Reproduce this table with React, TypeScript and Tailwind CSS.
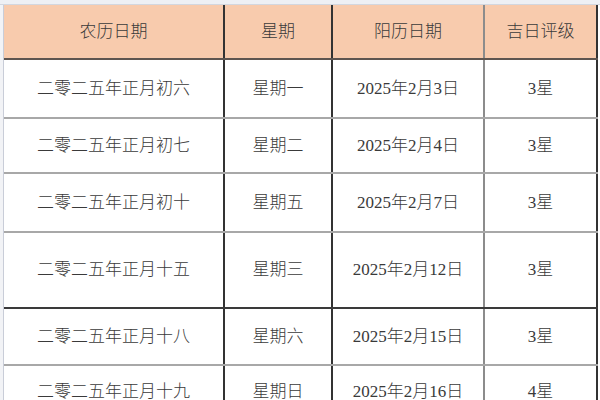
const rows = [
  { lunar: "二零二五年正月初六", week: "星期一", solar: "2025年2月3日", rate: "3星", h: "h-[59px]", b: "border-b-2 border-[#a8a8a8]" },
  { lunar: "二零二五年正月初七", week: "星期二", solar: "2025年2月4日", rate: "3星", h: "h-[55px]", b: "border-b-2 border-[#a8a8a8]" },
  { lunar: "二零二五年正月初十", week: "星期五", solar: "2025年2月7日", rate: "3星", h: "h-[59px]", b: "border-b-2 border-[#a8a8a8]" },
  { lunar: "二零二五年正月十五", week: "星期三", solar: "2025年2月12日", rate: "3星", h: "h-[76px]", b: "border-b-2 border-[#3a3a3a]" },
  { lunar: "二零二五年正月十八", week: "星期六", solar: "2025年2月15日", rate: "3星", h: "h-[57px]", b: "border-b-2 border-[#a8a8a8]" },
  { lunar: "二零二五年正月十九", week: "星期日", solar: "2025年2月16日", rate: "4星", h: "h-[52px]", b: "" },
];

const Row = ({ cells, h, b, head }: { cells: string[]; h: string; b: string; head?: boolean }) => (
  <div className={`flex ${h} ${b} ${head ? "bg-[#f8cbad]" : "bg-white"}`}>
    <div className="w-[221px] flex items-center justify-center border-r-2 border-[#333]">{cells[0]}</div>
    <div className="w-[108px] flex items-center justify-center border-r-2 border-[#333]">{cells[1]}</div>
    <div className="w-[152px] flex items-center justify-center border-r-2 border-[#8c8c8c]">{cells[2]}</div>
    <div className="w-[113px] flex items-center justify-center border-r-2 border-[#333]">{cells[3]}</div>
  </div>
);

const App = () => {
  return (
    <div className="w-[600px] h-[400px] overflow-hidden bg-white text-[#3a3a3a] font-light text-[17px] font-['Liberation_Serif','Noto_Sans_CJK_SC',serif]">
      {/* spreadsheet top strip */}
      <div className="h-[5px] bg-[#eef0f4] border-b border-[#d3d7df]" />
      <div className="flex">
        <div className="w-[4px] shrink-0 bg-[#f2f3f6] border-r border-[#c9cdd8] h-[400px]" />
        <div className="shrink-0">
          <Row cells={["农历日期", "星期", "阳历日期", "吉日评级"]} h="h-[55px]" b="border-b-2 border-[#5e5550]" head />
          {rows.map((r) => (
            <Row key={r.lunar} cells={[r.lunar, r.week, r.solar, r.rate]} h={r.h} b={r.b} />
          ))}
        </div>
        <div className="flex-1 bg-white" />
      </div>
    </div>
  );
};

export default App;
